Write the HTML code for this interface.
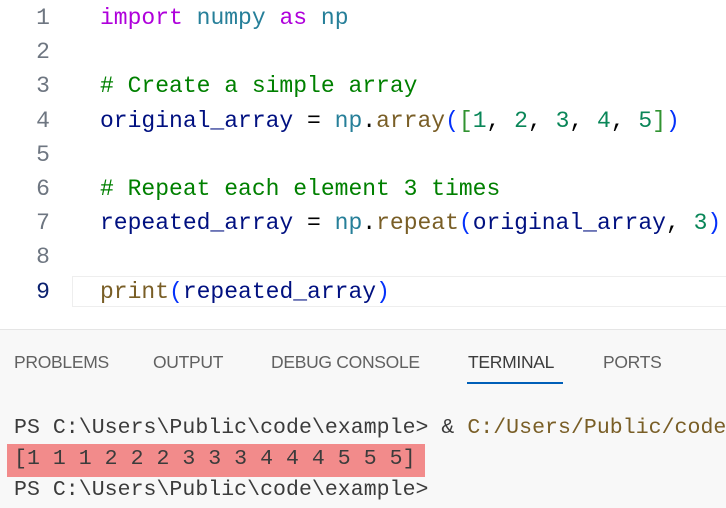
<!DOCTYPE html>
<html><head><meta charset="utf-8"><style>
html,body{margin:0;padding:0;width:726px;height:507px;overflow:hidden;background:#fff}
.ed{position:absolute;left:0;top:0;width:726px;height:330px;background:#fff;font-family:"Liberation Mono",monospace;font-size:23px;overflow:hidden}
.ln{position:absolute;left:0;height:34px;line-height:34px;width:726px;white-space:pre;overflow:hidden}
.num{position:absolute;left:30px;width:26px;text-align:center;color:#6e7681}
.num.cur{color:#0b216f}
.code{position:absolute;left:100px;letter-spacing:0px}
.k{color:#af00db}.m{color:#267f99}.c{color:#008000}.v{color:#001080}.f{color:#795e26}.n{color:#098658}.b1{color:#0431fa}.b2{color:#319331}.t{color:#000}
.curline{position:absolute;left:72px;top:276px;width:660px;height:31px;border:1.5px solid #eeeeee;box-sizing:border-box}
.panel{position:absolute;left:0;top:329px;width:726px;height:178px;background:#f8f8f8;border-top:1.5px solid #e5e5e5;overflow:hidden}
.tab{position:absolute;top:22px;font-family:"Liberation Sans",sans-serif;font-size:17.5px;color:#616161;letter-spacing:-0.3px}
.tab.act{color:#3b3b3b}
.ul{position:absolute;left:467px;top:52px;width:96px;height:1.5px;background:#005fb8}
.term{position:absolute;left:14px;font-family:"Liberation Mono",monospace;font-size:21.5px;color:#3b3b3b;white-space:pre;line-height:31px;letter-spacing:0.05px}
.hl{position:absolute;left:7px;top:114px;width:418px;height:33px;background:#f28b8b}
.y{color:#795e26}
</style></head><body>
<div class="ed">
<div class="curline"></div>
<div class="ln" style="top:1px"><span class="num">1</span><span class="code"><span class="k">import</span> <span class="m">numpy</span> <span class="k">as</span> <span class="m">np</span></span></div>
<div class="ln" style="top:35px"><span class="num">2</span></div>
<div class="ln" style="top:69px"><span class="num">3</span><span class="code c"># Create a simple array</span></div>
<div class="ln" style="top:104px"><span class="num">4</span><span class="code"><span class="v">original_array</span> <span class="t">=</span> <span class="m">np</span><span class="t">.</span><span class="f">array</span><span class="b1">(</span><span class="b2">[</span><span class="n">1</span><span class="t">, </span><span class="n">2</span><span class="t">, </span><span class="n">3</span><span class="t">, </span><span class="n">4</span><span class="t">, </span><span class="n">5</span><span class="b2">]</span><span class="b1">)</span></span></div>
<div class="ln" style="top:138px"><span class="num">5</span></div>
<div class="ln" style="top:172px"><span class="num">6</span><span class="code c"># Repeat each element 3 times</span></div>
<div class="ln" style="top:206px"><span class="num">7</span><span class="code"><span class="v">repeated_array</span> <span class="t">=</span> <span class="m">np</span><span class="t">.</span><span class="f">repeat</span><span class="b1">(</span><span class="v">original_array</span><span class="t">, </span><span class="n">3</span><span class="b1">)</span></span></div>
<div class="ln" style="top:240px"><span class="num">8</span></div>
<div class="ln" style="top:275px"><span class="num cur">9</span><span class="code"><span class="f">print</span><span class="b1">(</span><span class="v">repeated_array</span><span class="b1">)</span></span></div>
</div>
<div class="panel">
<span class="tab" style="left:14px">PROBLEMS</span>
<span class="tab" style="left:153px">OUTPUT</span>
<span class="tab" style="left:271px">DEBUG CONSOLE</span>
<span class="tab act" style="left:468px">TERMINAL</span>
<span class="tab" style="left:603px">PORTS</span>
<div class="ul"></div>
<div class="hl"></div>
<div class="term" style="top:83px">PS C:\Users\Public\code\example&gt; &amp; <span class="y">C:/Users/Public/code</span></div>
<div class="term" style="top:114px">[1 1 1 2 2 2 3 3 3 4 4 4 5 5 5]</div>
<div class="term" style="top:145px">PS C:\Users\Public\code\example&gt;</div>
</div>
</body></html>
